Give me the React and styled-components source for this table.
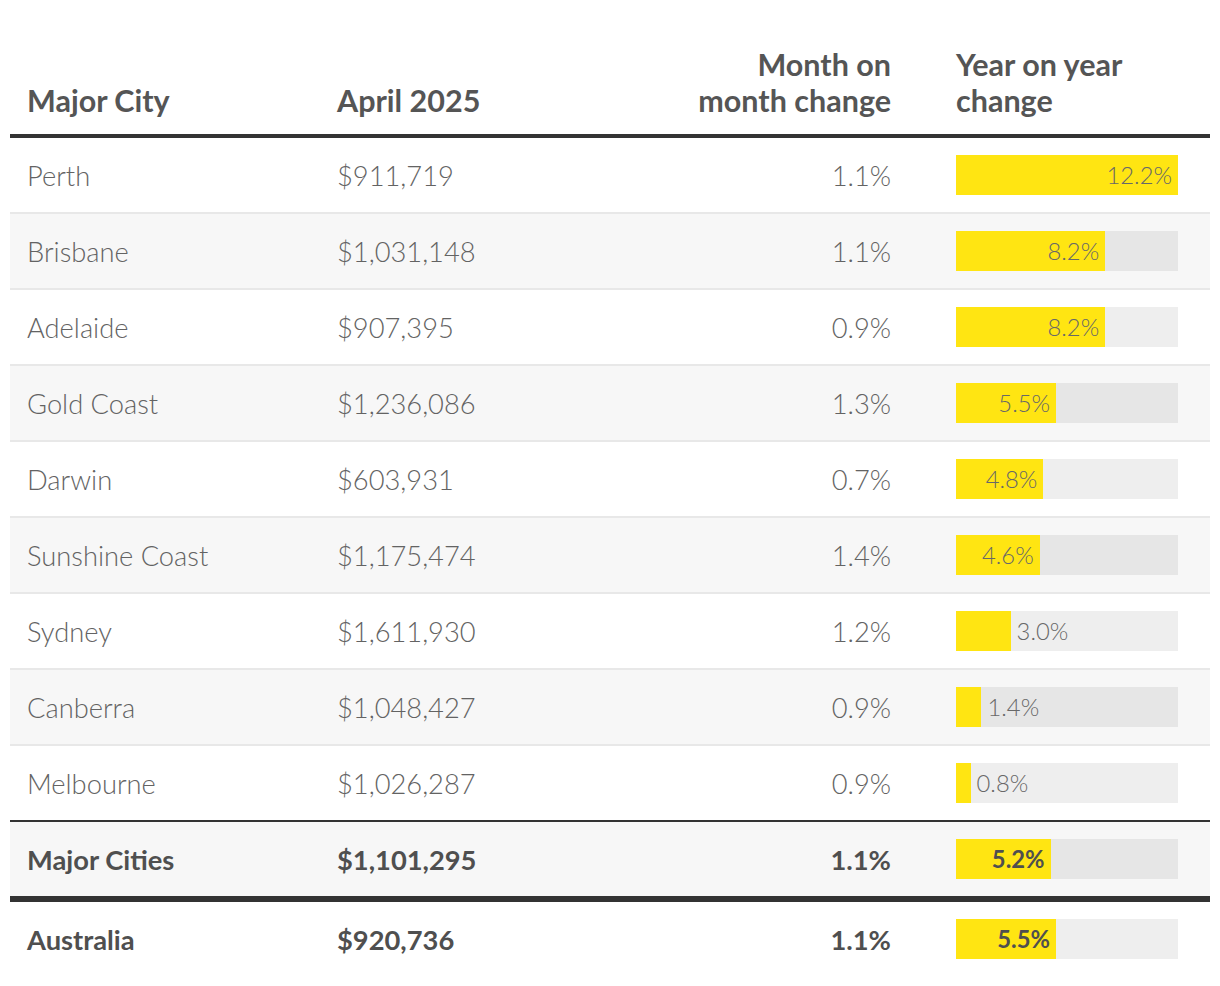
import React from "react";
import styled, { createGlobalStyle, css } from "styled-components";

const Global = createGlobalStyle`
  html, body { margin: 0; padding: 0; background: #fff; }
  body { font-family: Lato, "Open Sans", sans-serif; color: #555; }
`;

const Page = styled.div`
  padding: 46px 10px 0 10px;
  width: 1200px;
`;

const cols = css`
  display: grid;
  grid-template-columns: 310px 1fr 200px 287px;
  padding: 0 32px 0 17px;
  align-items: center;
`;

const HeadRow = styled.div`
  ${cols};
  align-items: end;
  padding-bottom: 16px;
  border-bottom: 4px solid #333;
`;

const HeadCell = styled.div`
  font-weight: 700;
  font-size: 30.5px;
  line-height: 36px;
  color: #555;
  white-space: nowrap;
  text-align: ${(p) => (p.$right ? "right" : "left")};
  padding-left: ${(p) => (p.$bar ? "65px" : "0")};
`;

const Row = styled.div`
  ${cols};
  height: 74px;
  background: ${(p) => (p.$shade ? "#f7f7f7" : "#fff")};
  border-top: ${(p) => (p.$topRule ? "2px solid #333" : "none")};
  border-bottom: ${(p) => p.$bottomRule};
  font-family: ${(p) => (p.$bold ? "Lato" : '"Lato Light", Lato')}, sans-serif;
  font-weight: ${(p) => (p.$bold ? 700 : 300)};
  font-size: 27.3px;
  color: ${(p) => (p.$bold ? "#4f4f4f" : "#636363")};
`;

const Cell = styled.div`
  text-align: ${(p) => (p.$right ? "right" : "left")};
  white-space: nowrap;
`;

const BarCell = styled.div`
  padding-left: 65px;
`;

const Track = styled.div`
  display: flex;
  align-items: center;
  height: 40px;
  background: rgba(0, 0, 0, 0.068);
`;

const Fill = styled.div`
  height: 100%;
  background: #ffe512;
  display: flex;
  align-items: center;
  justify-content: flex-end;
  flex: none;
`;

const BarLabel = styled.span`
  font-size: 23.8px;
  font-weight: ${(p) => (p.$bold ? 700 : 300)};
  color: ${(p) => (p.$bold ? "#4f4f4f" : "#686868")};
  padding: ${(p) => (p.$inside ? "0 6px 0 0" : "0 0 0 6px")};
  white-space: nowrap;
`;

const MAX = 12.2;
const WIDTH = 222;

const rows = [
  ["Perth", "$911,719", "1.1%", 12.2],
  ["Brisbane", "$1,031,148", "1.1%", 8.2],
  ["Adelaide", "$907,395", "0.9%", 8.2],
  ["Gold Coast", "$1,236,086", "1.3%", 5.5],
  ["Darwin", "$603,931", "0.7%", 4.8],
  ["Sunshine Coast", "$1,175,474", "1.4%", 4.6],
  ["Sydney", "$1,611,930", "1.2%", 3.0],
  ["Canberra", "$1,048,427", "0.9%", 1.4],
  ["Melbourne", "$1,026,287", "0.9%", 0.8],
];

function Bar({ value, bold }) {
  const w = (value / MAX) * WIDTH;
  const inside = value >= 4;
  const label = `${value.toFixed(1)}%`;
  return (
    <BarCell>
      <Track>
        <Fill style={{ width: `${w}px` }}>
          {inside && (
            <BarLabel $inside $bold={bold}>
              {label}
            </BarLabel>
          )}
        </Fill>
        {!inside && <BarLabel $bold={bold}>{label}</BarLabel>}
      </Track>
    </BarCell>
  );
}

export default function App() {
  return (
    <>
      <Global />
      <Page>
        <HeadRow>
          <HeadCell>Major City</HeadCell>
          <HeadCell>April 2025</HeadCell>
          <HeadCell $right>
            Month on
            <br />
            month change
          </HeadCell>
          <HeadCell $bar>
            Year on year
            <br />
            change
          </HeadCell>
        </HeadRow>
        {rows.map(([city, price, mom, yoy], i) => (
          <Row
            key={city}
            $shade={i % 2 === 1}
            $bottomRule={i < rows.length - 1 ? "2px solid #e8e8e8" : "none"}
          >
            <Cell>{city}</Cell>
            <Cell>{price}</Cell>
            <Cell $right>{mom}</Cell>
            <Bar value={yoy} />
          </Row>
        ))}
        <Row $shade $bold $topRule $bottomRule="6px solid #333">
          <Cell>Major Cities</Cell>
          <Cell>$1,101,295</Cell>
          <Cell $right>1.1%</Cell>
          <Bar value={5.2} bold />
        </Row>
        <Row $bold $bottomRule="none">
          <Cell>Australia</Cell>
          <Cell>$920,736</Cell>
          <Cell $right>1.1%</Cell>
          <Bar value={5.5} bold />
        </Row>
      </Page>
    </>
  );
}
